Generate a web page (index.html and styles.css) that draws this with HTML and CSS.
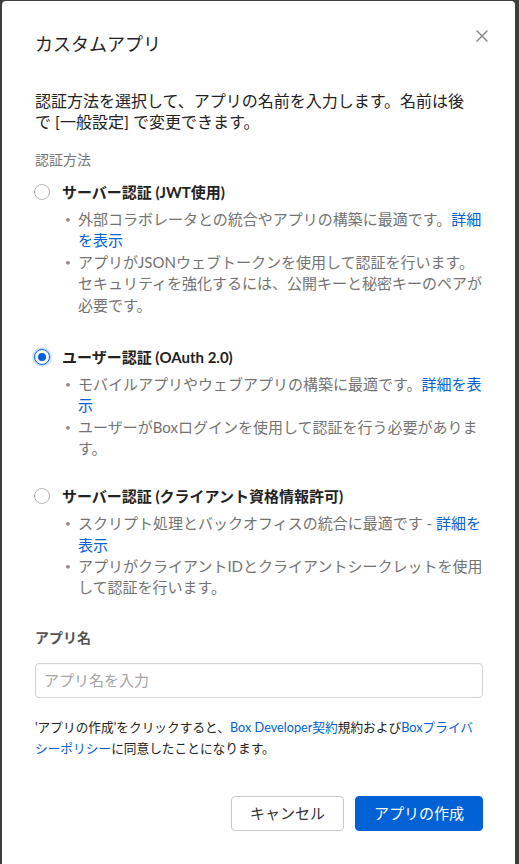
FILE: index.html
```html
<!DOCTYPE html>
<html lang="ja">
<head>
<meta charset="utf-8">
<title>カスタムアプリ</title>
<link rel="stylesheet" href="styles.css">
</head>
<body>
<div class="dialog">
  <div class="header">
    <h1 class="title">カスタムアプリ</h1>
    <button class="close" aria-label="閉じる">
      <svg width="12" height="12" viewBox="0 0 12 12"><path d="M1 1L11 11M11 1L1 11" stroke="#8a8a8a" stroke-width="1.5" fill="none" stroke-linecap="round"/></svg>
    </button>
  </div>
  <p class="desc">認証方法を選択して、アプリの名前を入力します。名前は後で [一般設定] で変更できます。</p>
  <div class="section-label">認証方法</div>

  <div class="option opt1">
    <span class="radio"></span>
    <div class="opt-body">
      <div class="opt-label">サーバー認証 (JWT使用)</div>
      <ul class="bullets">
        <li><span>外部コラボレータとの統合やアプリの構築に最適です。<a class="link">詳細を表示</a></span></li>
        <li><span>アプリがJSONウェブトークンを使用して認証を行います。セキュリティを強化するには、公開キーと秘密キーのペアが必要です。</span></li>
      </ul>
    </div>
  </div>

  <div class="option opt2">
    <span class="radio checked"></span>
    <div class="opt-body">
      <div class="opt-label">ユーザー認証 (OAuth 2.0)</div>
      <ul class="bullets">
        <li><span>モバイルアプリやウェブアプリの構築に最適です。<a class="link">詳細を表示</a></span></li>
        <li><span>ユーザーがBoxログインを使用して認証を行う必要があります。</span></li>
      </ul>
    </div>
  </div>

  <div class="option opt3">
    <span class="radio"></span>
    <div class="opt-body">
      <div class="opt-label">サーバー認証 (クライアント資格情報許可)</div>
      <ul class="bullets">
        <li><span>スクリプト処理とバックオフィスの統合に最適です - <a class="link">詳細を表示</a></span></li>
        <li><span>アプリがクライアントIDとクライアントシークレットを使用して認証を行います。</span></li>
      </ul>
    </div>
  </div>

  <div class="field-label">アプリ名</div>
  <input class="text-input" type="text" placeholder="アプリ名を入力">

  <p class="consent">'アプリの作成'をクリックすると、<a class="link">Box Developer契約</a>規約および<a class="link">Boxプライバシーポリシー</a>に同意したことになります。</p>

  <div class="footer">
    <button class="btn btn-secondary">キャンセル</button>
    <button class="btn btn-primary">アプリの作成</button>
  </div>
</div>
</body>
</html>
```
FILE: styles.css
```css
* { box-sizing: border-box; }
html, body { margin: 0; padding: 0; }
body {
  background: #3d3d3d;
  font-family: "Lato", "Noto Sans CJK JP", sans-serif;
  color: #222;
  overflow: hidden;
}
.dialog {
  background: #fff;
  margin: 1px 4px 0 2px;
  min-height: 863px;
  border-radius: 4px 4px 0 0;
  padding: 29px 32px 0 33px;
}
.header {
  display: flex;
  justify-content: space-between;
  align-items: flex-start;
}
.title {
  margin: 0;
  font-size: 18px;
  line-height: 28px;
  font-weight: 400;
  color: #222;
}
.close {
  border: 0;
  background: none;
  padding: 0;
  margin: 0 -5px 0 0;
  width: 12px;
  height: 12px;
  display: flex;
}
.desc {
  margin: 32px 0 0;
  padding-right: 6px;
  font-size: 16px;
  line-height: 21px;
  color: #222;
}
.section-label {
  margin-top: 17.5px;
  font-size: 14px;
  line-height: 20px;
  color: #767676;
}
.option {
  display: grid;
  grid-template-columns: 27px 1fr;
}
.opt1 { margin-top: 11.5px; }
.opt2 { margin-top: 30px; }
.opt3 { margin-top: 25.5px; }
.radio {
  width: 16px;
  height: 16px;
  margin-top: 3px;
  margin-left: -1px;
  border: 1px solid #b5b5b5;
  border-radius: 50%;
  background: #fff;
  display: flex;
  align-items: center;
  justify-content: center;
}
.radio.checked {
  border: 1.5px solid #0061d5;
  box-shadow: 0 0 0 2px rgba(0, 97, 213, 0.18);
}
.radio.checked::after {
  content: "";
  width: 8px;
  height: 8px;
  border-radius: 50%;
  background: #0061d5;
}
.opt-label {
  font-size: 15px;
  line-height: 22px;
  font-weight: 700;
  color: #222;
}
.bullets {
  list-style: none;
  margin: 6px 0 0;
  padding: 0;
}
.bullets li {
  display: grid;
  grid-template-columns: 16px 1fr;
  font-size: 15px;
  line-height: 21.4px;
  color: #737373;
}
.bullets li::before {
  content: "•";
  font-size: 10px;
  padding-left: 3px;
  color: #8a8a8a;
}
.link {
  color: #0061d5;
  text-decoration: none;
}
.field-label {
  margin-top: 29px;
  font-size: 14px;
  line-height: 20px;
  font-weight: 700;
  color: #555;
}
.text-input {
  display: block;
  width: 100%;
  height: 35px;
  margin-top: 15px;
  border: 1px solid #d3d3d3;
  border-radius: 4px;
  padding: 0 8px;
  font-family: inherit;
  font-size: 15px;
  color: #222;
  box-shadow: inset 0 1px 1px rgba(0,0,0,0.04);
}
.text-input::placeholder { color: #a3a3a3; }
.consent {
  margin: 19.5px 0 0;
  font-size: 12.7px;
  line-height: 21px;
  color: #222;
}
.footer {
  display: flex;
  justify-content: flex-end;
  gap: 11px;
  margin-top: 36.5px;
}
.btn {
  height: 35px;
  padding: 0 18px;
  border-radius: 4px;
  font-family: inherit;
  font-size: 15px;
  line-height: 33px;
}
.btn-secondary {
  background: #fff;
  border: 1px solid #c9c9c9;
  color: #333;
}
.btn-primary {
  background: #0061d5;
  border: 1px solid #0061d5;
  color: #fff;
}
```
